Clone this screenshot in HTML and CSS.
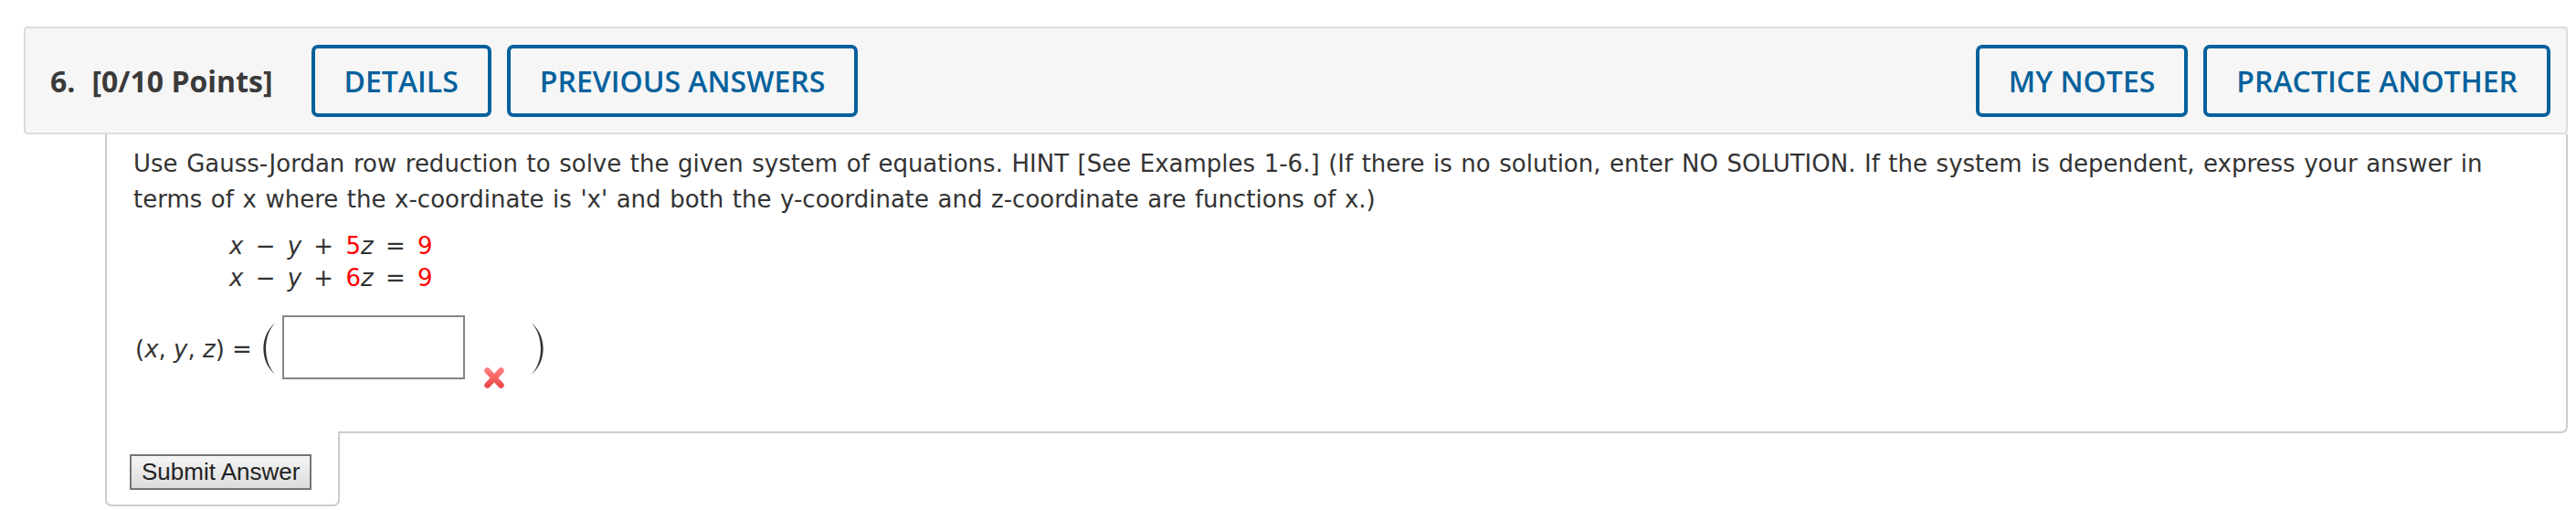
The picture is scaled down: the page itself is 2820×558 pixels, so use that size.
FILE: index.html
```html
<!DOCTYPE html>
<html lang="en">
<head>
<meta charset="utf-8">
<title>Question 6</title>
<link rel="stylesheet" href="styles.css">
</head>
<body>
<div class="page">
  <div class="question">
    <div class="qhead">
      <span class="qnum">6.</span>
      <span class="qpts">[0/10 Points]</span>
      <button class="qbtn qbtn-first">DETAILS</button>
      <button class="qbtn">PREVIOUS ANSWERS</button>
      <button class="qbtn qbtn-push">MY NOTES</button>
      <button class="qbtn">PRACTICE ANOTHER</button>
    </div>
    <div class="qbody">
      <p class="prompt">Use Gauss-Jordan row reduction to solve the given system of equations. HINT [See Examples 1-6.] (If there is no solution, enter NO SOLUTION. If the system is dependent, express your answer in terms of x where the x-coordinate is 'x' and both the y-coordinate and z-coordinate are functions of x.)</p>
      <div class="system">
        <div class="eq"><i>x</i> − <i>y</i> + <span class="red">5</span><i>z</i> = <span class="red">9</span></div>
        <div class="eq"><i>x</i> − <i>y</i> + <span class="red">6</span><i>z</i> = <span class="red">9</span></div>
      </div>
      <div class="answer">
        <span class="lbl">(<i>x</i>, <i>y</i>, <i>z</i>) =</span>
        <svg class="paren" viewBox="0 0 15 57" aria-hidden="true"><path d="M14.5 0 C-3 14 -3 43 14.5 57 C0.6 43 0.6 14 14.5 0 Z" fill="#333"/></svg>
        <input class="ans-input" type="text" aria-label="answer">
        <svg class="wrong" viewBox="0 0 26 27" aria-hidden="true">
          <defs>
            <linearGradient id="xg" x1="0" y1="0" x2="0" y2="1">
              <stop offset="0" stop-color="#ff7a7a"/>
              <stop offset="1" stop-color="#ee4b4b"/>
            </linearGradient>
          </defs>
          <path d="M5.5 5.5 L20.5 21.5 M20.5 5.5 L5.5 21.5" stroke="url(#xg)" stroke-width="6.5" stroke-linecap="round" fill="none"/>
        </svg>
        <svg class="paren paren-r" viewBox="0 0 15 57" aria-hidden="true"><path d="M0.5 0 C18 14 18 43 0.5 57 C14.4 43 14.4 14 0.5 0 Z" fill="#333"/></svg>
      </div>
    </div>
    <div class="qsubmit">
      <button class="submit">Submit Answer</button>
    </div>
  </div>
</div>
</body>
</html>
```
FILE: styles.css
```css
html, body {
  margin: 0;
  padding: 0;
  background: #ffffff;
}

.page {
  padding: 29px 9px 0 26px;
}

.qhead {
  display: flex;
  align-items: center;
  height: 118px;
  box-sizing: border-box;
  border: 2px solid #dcdcdc;
  border-radius: 4px;
  background: #f6f6f6;
  padding: 0 17px 0 27px;
  font-family: "Open Sans", "Noto Sans", sans-serif;
}

.qnum,
.qpts {
  font-weight: 700;
  font-size: 32px;
  color: #3a3a3a;
  white-space: nowrap;
}

.qpts {
  margin-left: 18px;
}

.qbtn {
  height: 79px;
  box-sizing: border-box;
  border: 4px solid #05619c;
  border-radius: 7px;
  background: transparent;
  color: #05619c;
  font-family: "Open Sans", "Noto Sans", sans-serif;
  font-weight: 600;
  font-size: 32px;
  padding: 0 32px;
  margin: 0 0 0 17px;
  white-space: nowrap;
  cursor: pointer;
}

.qbtn-first {
  margin-left: 42px;
}

.qbtn-push {
  margin-left: auto;
}

.qbody {
  margin-left: 89px;
  border: 2px solid #cccccc;
  border-top: none;
  border-radius: 0 0 7px 0;
  padding: 12.5px 29px 57px 29px;
  color: #333333;
  font-family: "DejaVu Sans", Verdana, sans-serif;
  font-size: 26px;
}

.prompt {
  margin: 0;
  line-height: 39px;
  word-spacing: 1.3px;
}

.system {
  margin: 14px 0 0 105px;
  line-height: 35px;
  word-spacing: 5px;
}

.red {
  color: #ff0000;
}

.answer {
  display: flex;
  align-items: center;
  height: 70px;
  margin: 23.5px 0 0 2px;
}

.lbl {
  line-height: 30px;
  padding-top: 4px;
  white-space: nowrap;
}

.paren {
  width: 15px;
  height: 57px;
  margin: 3px 0 0 11px;
  flex: none;
}

.ans-input {
  width: 200px;
  height: 70px;
  box-sizing: border-box;
  border: 2px solid #858585;
  margin: 0 0 0 7px;
  padding: 0 6px;
  background: #ffffff;
  font-family: "DejaVu Sans", Verdana, sans-serif;
  font-size: 26px;
  flex: none;
}

.wrong {
  width: 26px;
  height: 27px;
  margin: 0 0 -12px 19px;
  align-self: flex-end;
  flex: none;
}

.paren-r {
  margin-left: 27px;
}

.qsubmit {
  margin: -2px 0 0 89px;
  width: 257px;
  box-sizing: border-box;
  border: 2px solid #cccccc;
  border-top: none;
  border-radius: 0 0 7px 7px;
  background: #ffffff;
  padding: 25px 0 16px 25px;
}

.submit {
  display: block;
  height: 39px;
  box-sizing: border-box;
  border: 2px solid #757575;
  border-radius: 0;
  background: linear-gradient(#f5f5f5, #dcdcdc);
  color: #222222;
  font-family: "Liberation Sans", Arial, sans-serif;
  font-size: 26px;
  line-height: 33px;
  padding: 0 11px;
  margin: 0;
}
```
